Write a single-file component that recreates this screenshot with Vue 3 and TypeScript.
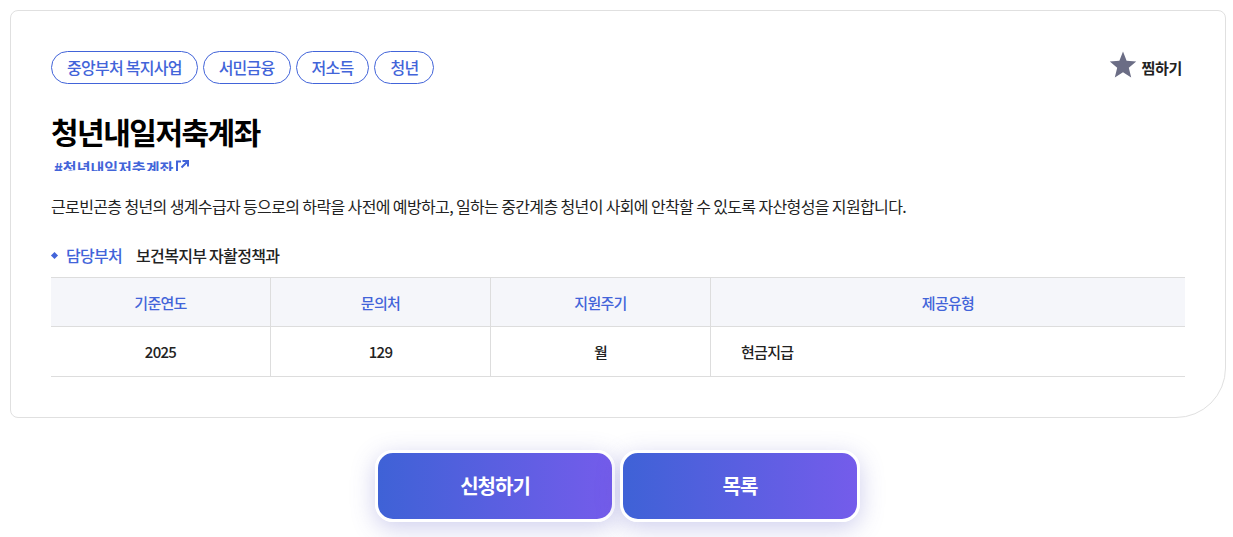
<script setup lang="ts">
const tags: string[] = ['중앙부처 복지사업', '서민금융', '저소득', '청년']
const heads: string[] = ['기준연도', '문의처', '지원주기', '제공유형']
const cells: string[] = ['2025', '129', '월', '현금지급']
</script>

<template>
  <div class="page">
    <section class="card">
      <div class="top">
        <ul class="tags">
          <li v-for="tag in tags" :key="tag" class="tag">{{ tag }}</li>
        </ul>
        <button class="fav" type="button">
          <svg class="star" width="28" height="27" viewBox="0 0 28 26" preserveAspectRatio="none">
            <path d="M14 0.5l3.6 8.9 9.6.7-7.4 6.1 2.4 9.3L14 20.4l-8.2 5.1 2.4-9.3L.8 10.1l9.6-.7z" fill="#6b6d85" />
          </svg>
          <span>찜하기</span>
        </button>
      </div>

      <h1 class="title">청년내일저축계좌</h1>
      <div class="hash-wrap">
        <a class="hash">
          <span>#청년내일저축계좌</span>
          <svg class="ext" width="13" height="13" viewBox="0 0 13 13" fill="none" stroke="#4264d9" stroke-width="2">
            <path d="M5 1.500H1V13M5.500 7.500L11 2M6.500 1H12V6.500" />
          </svg>
        </a>
      </div>

      <p class="desc">근로빈곤층 청년의 생계수급자 등으로의 하락을 사전에 예방하고, 일하는 중간계층 청년이 사회에 안착할 수 있도록 자산형성을 지원합니다.</p>

      <div class="dept">
        <span class="dot"></span>
        <span class="dept-label">담당부처</span>
        <span class="dept-name">보건복지부 자활정책과</span>
      </div>

      <div class="table">
        <div v-for="h in heads" :key="h" class="th">{{ h }}</div>
        <div v-for="(c, i) in cells" :key="c" class="td" :class="{ last: i === 3 }">{{ c }}</div>
      </div>
    </section>

    <div class="actions">
      <button class="btn" type="button">신청하기</button>
      <button class="btn" type="button">목록</button>
    </div>
  </div>
</template>

<style scoped>
.page {
  width: 1233px;
  height: 537px;
  overflow: hidden;
  padding: 10px 7px 0 10px;
  box-sizing: border-box;
  font-family: "Noto Sans CJK KR", "Noto Sans", sans-serif;
  letter-spacing: -0.04em;
  color: #222;
}

.card {
  box-sizing: border-box;
  height: 408px;
  border: 1px solid #e0e0e0;
  border-radius: 8px 8px 50px 8px;
  padding: 40px 40px 0;
  background: #fff;
}

.top {
  display: flex;
  justify-content: space-between;
  align-items: center;
  height: 33px;
}

.tags {
  display: flex;
  gap: 5px;
  list-style: none;
  margin: 0;
  padding: 0;
}

.tag {
  height: 33px;
  box-sizing: border-box;
  line-height: 30px;
  padding: 0 15px;
  border: 1px solid #4264d9;
  border-radius: 17px;
  color: #4264d9;
  font-size: 16px;
  font-weight: 500;
  letter-spacing: -0.75px;
}

.fav {
  display: flex;
  align-items: center;
  gap: 4px;
  border: 0;
  padding: 0;
  margin-right: 3px;
  background: none;
  font: inherit;
  font-size: 15px;
  font-weight: 700;
  letter-spacing: -0.3px;
  color: #222;
}

.star {
  margin-bottom: 6px;
}

.title {
  margin: 26px 0 0;
  height: 42px;
  font-size: 30px;
  line-height: 42px;
  font-weight: 700;
  letter-spacing: -1.5px;
  color: #000;
}

.hash-wrap {
  height: 13px;
  margin-top: 6px;
  overflow: hidden;
}

.hash {
  display: flex;
  align-items: flex-start;
  gap: 3px;
  margin-left: 3px;
  font-size: 15px;
  line-height: 19px;
  font-weight: 700;
  color: #4264d9;
  letter-spacing: 0;
}

.ext {
  margin-top: 2px;
}

.desc {
  margin: 22px 0 0;
  font-size: 16px;
  line-height: 26px;
  letter-spacing: -0.63px;
  color: #222;
}

.dept {
  display: flex;
  align-items: center;
  margin-top: 23px;
  height: 26px;
  font-size: 16px;
  font-weight: 500;
  letter-spacing: -0.7px;
}

.dot {
  width: 5px;
  height: 5px;
  margin: 0 9px 0 1px;
  background: #4264d9;
  transform: rotate(45deg);
}

.dept-label {
  color: #4264d9;
  margin-right: 14px;
}

.table {
  display: grid;
  grid-template-columns: 220px 220px 220px 1fr;
  grid-template-rows: 49px 50px;
  margin-top: 9px;
  border-top: 1px solid #ddd;
}

.th,
.td {
  display: flex;
  align-items: center;
  justify-content: center;
  box-sizing: border-box;
  border-bottom: 1px solid #ddd;
  border-right: 1px solid #ddd;
  font-size: 15px;
  letter-spacing: -0.7px;
}

.th {
  background: #f5f6fa;
  color: #4264d9;
  font-weight: 500;
}

.td {
  color: #222;
  font-weight: 500;
  padding-bottom: 1px;
}

.th:nth-child(4),
.td:last-child {
  border-right: 0;
}

.td.last {
  justify-content: flex-start;
  padding-left: 30px;
}

.actions {
  display: flex;
  justify-content: center;
  gap: 5px;
  margin: 32px 0 0 -2px;
}

.btn {
  width: 240px;
  height: 72px;
  box-sizing: border-box;
  border: 3px solid #fff;
  border-radius: 18px;
  padding: 0 0 2px 1px;
  background: linear-gradient(90deg, #3e62d6, #755ceb) border-box;
  box-shadow: 0 6px 24px rgba(80, 80, 190, 0.28);
  color: #fff;
  font: inherit;
  font-size: 20px;
  font-weight: 700;
  letter-spacing: -1px;
}
</style>

<style>
body {
  margin: 0;
  background: #fff;
}
</style>
